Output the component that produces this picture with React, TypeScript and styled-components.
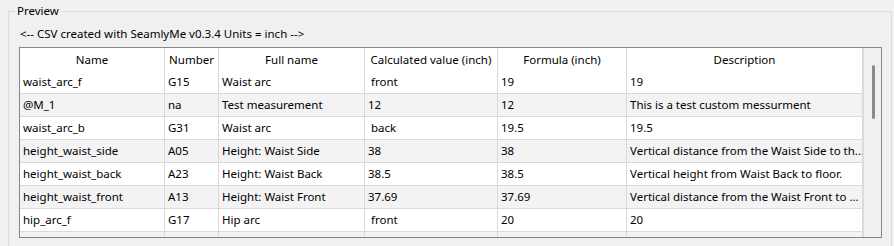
import React from "react";
import styled, { createGlobalStyle } from "styled-components";

const Global = createGlobalStyle`
  html, body { margin: 0; padding: 0; background: #f0f0f0; }
  body { font-family: "Segoe UI", "Noto Sans", "DejaVu Sans", sans-serif; font-size: 11.5px; color: #000; }
  * { box-sizing: border-box; }
`;

const GroupBox = styled.fieldset`
  margin: 4px 2px 0 8px;
  padding: 8px 9px 20px 10px;
  border: 1px solid #dcdcdc;
  min-width: 0;
`;

const Legend = styled.legend`
  margin-left: -4px;
  padding: 0 2px;
  line-height: 14px;
  font-size: 11.5px;
`;

const Caption = styled.div`
  height: 16px;
  line-height: 16px;
  padding-left: 1px;
  margin-bottom: 5px;
  white-space: pre;
`;

const Frame = styled.div`
  display: flex;
  border: 1px solid #828790;
  background: #fff;
  height: 191px;
  overflow: hidden;
`;

const Grid = styled.div`
  display: grid;
  grid-template-columns: 145px 54px 146px 133px 129px 236px;
  grid-auto-rows: 23px;
  flex: none;
  height: 189px;
  overflow: hidden;
`;

const HeaderCell = styled.div`
  border-right: 1px solid #d9d9d9;
  background: #fff;
  text-align: center;
  line-height: 23px;
  white-space: nowrap;
  overflow: hidden;
`;

const Cell = styled.div<{ $alt: boolean }>`
  border-right: 1px solid #d9d9d9;
  border-bottom: 1px solid #d9d9d9;
  background: ${(p) => (p.$alt ? "#f3f3f3" : "#ffffff")};
  padding-left: 3px;
  line-height: 22px;
  white-space: pre;
  overflow: hidden;
`;

const ScrollTrack = styled.div`
  flex: 1;
  border-left: 1px solid #dcdcdc;
  background: #f0f0f0;
  position: relative;
`;

const ScrollThumb = styled.div`
  position: absolute;
  left: 8px;
  top: 17px;
  width: 3px;
  height: 54px;
  border-radius: 2px;
  background: #8a8a8a;
`;

const headers = ["Name", "Number", "Full name", "Calculated value (inch)", "Formula (inch)", "Description"];

const rows: string[][] = [
  ["waist_arc_f", "G15", "Waist arc", " front", "19", "19"],
  ["@M_1", "na", "Test measurement", "12", "12", "This is a test custom messurment"],
  ["waist_arc_b", "G31", "Waist arc", " back", "19.5", "19.5"],
  ["height_waist_side", "A05", "Height: Waist Side", "38", "38", "Vertical distance from the Waist Side to th..."],
  ["height_waist_back", "A23", "Height: Waist Back", "38.5", "38.5", "Vertical height from Waist Back to floor."],
  ["height_waist_front", "A13", "Height: Waist Front", "37.69", "37.69", "Vertical distance from the Waist Front to ..."],
  ["hip_arc_f", "G17", "Hip arc", " front", "20", "20"],
  ["", "", "", "", "", ""],
];

export default function App() {
  return (
    <>
      <Global />
      <GroupBox>
        <Legend>Preview</Legend>
        <Caption>{"<-- CSV created with SeamlyMe v0.3.4 Units = inch -->"}</Caption>
        <Frame>
          <Grid>
            {headers.map((h) => (
              <HeaderCell key={h}>{h}</HeaderCell>
            ))}
            {rows.map((r, i) =>
              r.map((c, j) => (
                <Cell key={`${i}-${j}`} $alt={i % 2 === 1}>
                  {c}
                </Cell>
              ))
            )}
          </Grid>
          <ScrollTrack>
            <ScrollThumb />
          </ScrollTrack>
        </Frame>
      </GroupBox>
    </>
  );
}
